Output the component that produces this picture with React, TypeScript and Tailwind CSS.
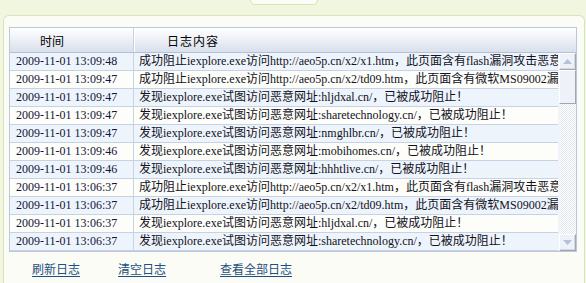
import React from "react";

const rows: [string, string][] = [
  ["2009-11-01 13:09:48", "成功阻止iexplore.exe访问http://aeo5p.cn/x2/x1.htm，此页面含有flash漏洞攻击恶意代码"],
  ["2009-11-01 13:09:47", "成功阻止iexplore.exe访问http://aeo5p.cn/x2/td09.htm，此页面含有微软MS09002漏洞攻击代码"],
  ["2009-11-01 13:09:47", "发现iexplore.exe试图访问恶意网址:hljdxal.cn/，已被成功阻止！"],
  ["2009-11-01 13:09:47", "发现iexplore.exe试图访问恶意网址:sharetechnology.cn/，已被成功阻止！"],
  ["2009-11-01 13:09:47", "发现iexplore.exe试图访问恶意网址:nmghlbr.cn/，已被成功阻止！"],
  ["2009-11-01 13:09:46", "发现iexplore.exe试图访问恶意网址:mobihomes.cn/，已被成功阻止！"],
  ["2009-11-01 13:09:46", "发现iexplore.exe试图访问恶意网址:hhhtlive.cn/，已被成功阻止！"],
  ["2009-11-01 13:06:37", "成功阻止iexplore.exe访问http://aeo5p.cn/x2/x1.htm，此页面含有flash漏洞攻击恶意代码"],
  ["2009-11-01 13:06:37", "成功阻止iexplore.exe访问http://aeo5p.cn/x2/td09.htm，此页面含有微软MS09002漏洞攻击代码"],
  ["2009-11-01 13:06:37", "发现iexplore.exe试图访问恶意网址:hljdxal.cn/，已被成功阻止！"],
  ["2009-11-01 13:06:37", "发现iexplore.exe试图访问恶意网址:sharetechnology.cn/，已被成功阻止！"],
];

function Arrow({ up }: { up: boolean }) {
  return (
    <svg width="9" height="5" viewBox="0 0 9 5">
      <path d={up ? "M0 5 L4.5 0 L9 5 Z" : "M0 0 L4.5 5 L9 0 Z"} fill="#b4c2d8" />
    </svg>
  );
}

function ScrollButton({ up }: { up: boolean }) {
  return (
    <div className="h-[17px] flex items-center justify-center bg-[#eef1f7] border border-t-white border-l-white border-r-[#9ea6b4] border-b-[#9ea6b4] shadow-[inset_-1px_-1px_0_#d4d9e2]">
      <Arrow up={up} />
    </div>
  );
}

export default function App() {
  return (
    <div
      className="w-[586px] h-[283px] overflow-hidden bg-[#f1f6df] text-[12px] text-black"
      style={{ fontFamily: '"Liberation Serif", "Noto Sans CJK SC", serif' }}
    >
      <div className="h-[15px]">
        <div className="ml-[250px] w-[68px] h-[5px] bg-[#fbfcf5] border border-t-0 border-[#d7e2b8] rounded-b-[5px]" />
      </div>
      <div className="ml-[3px] w-[582px] h-[268px] bg-[#fbfcf6] border border-b-0 border-[#d9e4bd] rounded-t-[6px] pt-[11px]">
        <div className="ml-[5px] w-[568px] border border-[#bcc7d8] bg-white">
          <div className="flex h-[25px] border-b border-b-[#b3c0d6] bg-gradient-to-b from-white to-[#d9e0ec]">
            <div className="w-[124px] border-r border-r-[#c9d2e0] shadow-[1px_0_0_#ffffff] pl-[30px] pt-[5px]">时间</div>
            <div className="flex-1 pl-[33px] pt-[5px] tracking-[1px]">日志内容</div>
          </div>
          <div className="flex">
            <div className="w-[548px]">
              {rows.map(([t, msg], i) => (
                <div
                  key={i}
                  className={`flex h-[18px] border-b border-b-[#c6d3e7] ${i % 2 === 0 ? "bg-[#eef4fc]" : "bg-[#fdfdf9]"}`}
                >
                  <div className="w-[124px] shrink-0 border-r border-r-[#c6d3e7] pl-[6px] leading-[17px] text-[12px] text-[#14143a] whitespace-nowrap overflow-hidden">
                    {t}
                  </div>
                  <div className="flex-1 overflow-hidden whitespace-nowrap pl-[5px] leading-[17px] text-[#111122]">
                    {msg}
                  </div>
                </div>
              ))}
            </div>
            <div className="w-[18px] pl-[1px] flex flex-col bg-[repeating-conic-gradient(#e4e9f1_0%_25%,#ffffff_0%_50%)] bg-[length:2px_2px]">
              <ScrollButton up />
              <div className="h-[34px] bg-[#eef1f7] border border-t-white border-l-white border-r-[#9ea6b4] border-b-[#9ea6b4]" />
              <div className="flex-1" />
              <ScrollButton up={false} />
            </div>
          </div>
        </div>
        <div className="flex mt-[9px] pl-[28px] text-[12px] text-[#1d4f80]" style={{ fontFamily: '"Noto Sans CJK SC", sans-serif' }}>
          <a className="underline underline-offset-2 leading-[16px]">刷新日志</a>
          <a className="underline underline-offset-2 leading-[16px] ml-[38px]">清空日志</a>
          <a className="underline underline-offset-2 leading-[16px] ml-[54px]">查看全部日志</a>
        </div>
      </div>
    </div>
  );
}
